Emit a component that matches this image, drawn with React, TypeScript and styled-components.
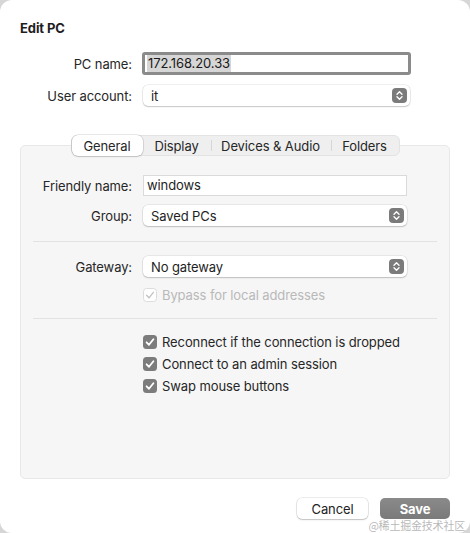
import styled, { createGlobalStyle } from 'styled-components';

const GlobalStyle = createGlobalStyle`
  html, body {
    margin: 0;
    padding: 0;
    background: #d6d6d6;
  }
  body {
    font-family: Inter, "Liberation Sans", Arial, sans-serif;
    font-size: 13px;
    letter-spacing: -0.1px;
    color: #222;
    -webkit-font-smoothing: antialiased;
  }
`;

const Window = styled.div`
  position: relative;
  width: 470px;
  height: 533px;
  box-sizing: border-box;
  background: #fff;
  border-radius: 12px;
  padding: 20px 20px 0;
  display: flex;
  flex-direction: column;
`;

const Title = styled.div`
  font-weight: 700;
  font-size: 13px;
  line-height: 16px;
  color: #1e1e1e;
`;

const Form = styled.div<{ $label: number; $control: number; $gap: number }>`
  display: grid;
  grid-template-columns: ${(p) => p.$label}px ${(p) => p.$control}px;
  column-gap: ${(p) => p.$gap}px;
  align-items: center;
`;

const Label = styled.div`
  text-align: right;
  line-height: 16px;
  color: #262626;
`;

const FocusField = styled.div`
  height: 23px;
  box-sizing: border-box;
  border: 3px solid #8b8b8b;
  border-radius: 3px;
  background: #fff;
  display: flex;
  align-items: stretch;
  padding: 0 2px;
`;

const Selected = styled.span`
  background: #d6d6d6;
  line-height: 17px;
  padding: 0 1px;
  color: #1a1a1a;
`;

const TextField = styled.div`
  height: 21px;
  box-sizing: border-box;
  border: 1px solid #dadada;
  background: #fff;
  padding: 0 3px;
  line-height: 19px;
  color: #1e1e1e;
`;

const Popup = styled.div`
  height: 21px;
  box-sizing: border-box;
  border-radius: 5px;
  background: #fff;
  box-shadow: 0 0 0 0.5px rgba(0, 0, 0, 0.12), 0 1px 1.5px rgba(0, 0, 0, 0.18);
  display: flex;
  align-items: center;
  justify-content: space-between;
  padding: 0 3px 0 8px;
  color: #1e1e1e;
`;

const TabsRow = styled.div`
  display: flex;
  justify-content: center;
  margin-bottom: -11px;
  position: relative;
  z-index: 1;
`;

const Tabs = styled.div`
  display: flex;
  align-items: center;
  height: 21px;
  box-sizing: border-box;
  background: #efefef;
  border: 1px solid #e3e3e3;
  border-radius: 6px;
`;

const Tab = styled.div<{ $active?: boolean; $width: number; $sep?: boolean }>`
  position: relative;
  width: ${(p) => p.$width}px;
  height: 21px;
  box-sizing: border-box;
  display: flex;
  align-items: center;
  justify-content: center;
  color: #262626;
  border-radius: 6px;
  ${(p) =>
    p.$active &&
    `background: #fff;
     box-shadow: 0 0 0 0.5px rgba(0,0,0,0.18), 0 1px 1.5px rgba(0,0,0,0.15);`}
  ${(p) =>
    p.$sep &&
    `&::before {
       content: '';
       position: absolute;
       left: 0;
       top: 5px;
       width: 1px;
       height: 11px;
       background: #d6d6d6;
     }`}
`;

const Panel = styled.div`
  height: 334px;
  box-sizing: border-box;
  background: #f6f6f6;
  border: 1px solid #e8e8e8;
  border-radius: 5px;
  padding: 29px 0 0;
  display: flex;
  flex-direction: column;
`;

const Divider = styled.div`
  height: 1px;
  background: #e2e2e2;
  margin: 0 12px;
`;

const CheckRow = styled.div<{ $disabled?: boolean }>`
  display: flex;
  align-items: center;
  gap: 5px;
  height: 22px;
  padding-left: 122px;
  color: ${(p) => (p.$disabled ? '#b9b9b9' : '#262626')};
`;

const Footer = styled.div`
  display: flex;
  justify-content: flex-end;
  gap: 12px;
  margin-top: 19px;
`;

const Button = styled.div<{ $primary?: boolean }>`
  width: ${(p) => (p.$primary ? 70 : 71)}px;
  height: 21px;
  border-radius: 5px;
  display: flex;
  align-items: center;
  justify-content: center;
  font-size: 13px;
  ${(p) =>
    p.$primary
      ? `background: linear-gradient(#8a8a8a, #7a7a7a);
         color: #fff;
         font-weight: 700;`
      : `background: #fff;
         color: #222;
         box-shadow: 0 0 0 0.5px rgba(0,0,0,0.15), 0 1px 1.5px rgba(0,0,0,0.18);`}
`;

const Watermark = styled.div`
  position: absolute;
  right: 5px;
  bottom: 1px;
  font-family: "Noto Sans CJK SC", sans-serif;
  font-size: 11px;
  line-height: 14px;
  color: rgba(160, 160, 160, 0.75);
  letter-spacing: -0.2px;
`;

function Stepper() {
  return (
    <svg width="15" height="15" viewBox="0 0 15 15">
      <rect x="0" y="0" width="15" height="15" rx="4" fill="#7b7b7b" />
      <path d="M5 6.2 L7.5 3.8 L10 6.2" stroke="#fff" strokeWidth="1.4" fill="none" strokeLinecap="round" strokeLinejoin="round" />
      <path d="M5 8.8 L7.5 11.2 L10 8.8" stroke="#fff" strokeWidth="1.4" fill="none" strokeLinecap="round" strokeLinejoin="round" />
    </svg>
  );
}

function CheckBox({ disabled }: { disabled?: boolean }) {
  return (
    <svg width="14" height="14" viewBox="0 0 14 14">
      {disabled ? (
        <rect x="0.5" y="0.5" width="13" height="13" rx="3" fill="#fff" stroke="#dcdcdc" />
      ) : (
        <rect x="0" y="0" width="14" height="14" rx="3.5" fill="#7c7c7c" />
      )}
      <path
        d="M3.6 7.3 L6 9.8 L10.4 4.3"
        stroke={disabled ? '#c2c2c2' : '#fff'}
        strokeWidth={disabled ? 1.3 : 1.8}
        fill="none"
        strokeLinecap="round"
        strokeLinejoin="round"
      />
    </svg>
  );
}

export default function App() {
  return (
    <>
      <GlobalStyle />
      <Window>
        <Title>Edit PC</Title>

        <Form $label={112} $control={269} $gap={10} style={{ marginTop: 16, rowGap: 10 }}>
          <Label>PC name:</Label>
          <FocusField>
            <Selected>172.168.20.33</Selected>
          </FocusField>
          <Label>User account:</Label>
          <Popup style={{ marginLeft: 1, marginRight: 1 }}>
            <span>it</span>
            <Stepper />
          </Popup>
        </Form>

        <div style={{ marginTop: 29 }}>
          <TabsRow>
            <Tabs>
              <Tab $active $width={71}>General</Tab>
              <Tab $width={68}>Display</Tab>
              <Tab $width={120} $sep>Devices &amp; Audio</Tab>
              <Tab $width={68} $sep>Folders</Tab>
            </Tabs>
          </TabsRow>
          <Panel>
            <Form $label={111} $control={264} $gap={11} style={{ rowGap: 9 }}>
              <Label>Friendly name:</Label>
              <TextField>windows</TextField>
              <Label>Group:</Label>
              <Popup>
                <span>Saved PCs</span>
                <Stepper />
              </Popup>
            </Form>
            <Divider style={{ margin: '15px 12px 14px' }} />
            <Form $label={111} $control={264} $gap={11}>
              <Label>Gateway:</Label>
              <Popup>
                <span>No gateway</span>
                <Stepper />
              </Popup>
            </Form>
            <CheckRow $disabled style={{ marginTop: 7 }}>
              <CheckBox disabled />
              <span>Bypass for local addresses</span>
            </CheckRow>
            <Divider style={{ margin: '12px 12px 12px' }} />
            <CheckRow>
              <CheckBox />
              <span>Reconnect if the connection is dropped</span>
            </CheckRow>
            <CheckRow>
              <CheckBox />
              <span>Connect to an admin session</span>
            </CheckRow>
            <CheckRow>
              <CheckBox />
              <span>Swap mouse buttons</span>
            </CheckRow>
          </Panel>
        </div>

        <Footer>
          <Button>Cancel</Button>
          <Button $primary>Save</Button>
        </Footer>
        <Watermark>@稀土掘金技术社区</Watermark>
      </Window>
    </>
  );
}
